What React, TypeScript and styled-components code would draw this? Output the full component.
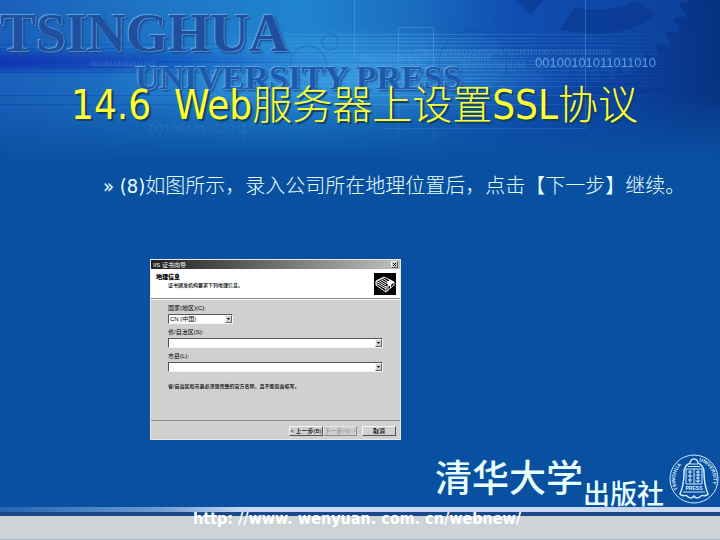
import React from "react";
import styled, { createGlobalStyle } from "styled-components";

const Global = createGlobalStyle`
  * { box-sizing: border-box; }
  body { margin: 0; background: #0a50a1; }
`;

const Slide = styled.main`
  position: relative;
  isolation: isolate;
  display: flex;
  flex-direction: column;
  min-height: 100vh;
  overflow: hidden;
  background: #0a50a1;
  font-family: "DejaVu Sans Condensed", "Noto Sans CJK SC", sans-serif;
`;

const Artwork = styled.svg`
  position: absolute;
  z-index: -1;
  top: 0;
  left: 0;
  width: 100%;
  height: 170px;
`;

const Masthead = styled.header`
  height: 80px;
  padding-top: 2px;
  font-family: "Liberation Serif", serif;
  font-weight: 700;
  white-space: nowrap;
`;

const Wordmark = styled.div<{ $small?: boolean }>`
  font-size: ${(p) => (p.$small ? 34 : 54)}px;
  line-height: ${(p) => (p.$small ? 28 : 62)}px;
  padding-left: ${(p) => (p.$small ? 135 : 0)}px;
  color: ${(p) => (p.$small ? "#1a5bb0" : "#214fa0")};
  text-shadow: -1px -1px 1px #62a6dc, 1px 1px 1px #5590c8, 2px 2px 2px #123f86;
`;

const Title = styled.h1`
  margin: 0;
  padding-left: 71px;
  font-size: 40px;
  line-height: 50px;
  font-weight: 300;
  color: #ffff32;
  text-shadow: 2px 2px 1px #123f5c;
  white-space: pre;
`;

const Point = styled.p`
  margin: 43px 0 0;
  padding-left: 103px;
  font-size: 20px;
  line-height: 26px;
  font-weight: 300;
  color: #e6ffff;
  white-space: nowrap;
`;

const Dialog = styled.section`
  width: 251px;
  margin: 60px 0 0 150px;
  border: 1px solid #e8e8e8;
  background: #d0d0d0;
  color: #000;
  font-family: "Liberation Sans", "Noto Sans CJK SC", sans-serif;
  font-size: 6px;
  line-height: 8px;
  white-space: nowrap;
`;

const TitleBar = styled.div`
  display: flex;
  align-items: center;
  justify-content: space-between;
  height: 9px;
  padding: 0 2px;
  background: linear-gradient(90deg, #202020, #c0c0c0);
  color: #fff;
`;

const CloseButton = styled.button`
  display: flex;
  align-items: center;
  justify-content: center;
  width: 7px;
  height: 7px;
  padding: 0;
  border: 1px solid;
  border-color: #f4f4f4 #555 #555 #f4f4f4;
  background: #d0d0d0;
`;

const Banner = styled.div`
  display: flex;
  justify-content: space-between;
  height: 30px;
  padding: 4px 4px 0 5px;
  border-bottom: 1px solid #8a8a8a;
  background: #fff;
`;

const BannerTitle = styled.h2`
  margin: 0;
  font-size: 6px;
  line-height: 8px;
  font-weight: 900;
`;

const BannerText = styled.p`
  margin: 0;
  padding-left: 12px;
  font-size: 5px;
  line-height: 8px;
  font-weight: 500;
`;

const Form = styled.form`
  border-top: 1px solid #f4f4f4;
`;

const Fields = styled.div`
  display: flex;
  flex-direction: column;
  height: 120px;
  padding: 4px 17px 0;
`;

const Label = styled.label`
  line-height: 9px;
`;

const Combo = styled.div<{ $short?: boolean }>`
  display: flex;
  width: ${(p) => (p.$short ? "65px" : "100%")};
  height: 10px;
  margin: 1px 0 4px;
  border: 1px solid;
  border-color: #555 #f4f4f4 #f4f4f4 #555;
  background: #fff;
`;

const fieldStyle = `
  flex: 1;
  min-width: 0;
  margin: 0;
  padding: 0 1px;
  border: 0;
  outline: 0;
  border-radius: 0;
  appearance: none;
  background: transparent;
  color: #000;
  font: 6px/8px "Liberation Sans", "Noto Sans CJK SC", sans-serif;
`;

const Select = styled.select`${fieldStyle}`;
const Input = styled.input`${fieldStyle}`;

const DropButton = styled.button`
  display: flex;
  align-items: center;
  justify-content: center;
  width: 7px;
  padding: 0;
  border: 1px solid;
  border-color: #f4f4f4 #666 #666 #f4f4f4;
  background: #d0d0d0;
`;

const Note = styled.p`
  margin: 6px 0 0;
  font-size: 5px;
  font-weight: 500;
`;

const Actions = styled.div`
  display: flex;
  justify-content: flex-end;
  height: 19px;
  padding: 5px 4px 4px;
  border-top: 1px solid #8a8a8a;
`;

const ActionButton = styled.button<{ $apart?: boolean }>`
  width: 34px;
  height: 10px;
  margin-left: ${(p) => (p.$apart ? 5 : 0)}px;
  padding: 0;
  border: 1px solid;
  border-color: #f4f4f4 #555 #555 #f4f4f4;
  background: #d0d0d0;
  color: #000;
  font: 500 6px/8px "Liberation Sans", "Noto Sans CJK SC", sans-serif;
  white-space: nowrap;
  &:disabled { color: #909090; border-color: #e4e4e4 #8a8a8a #8a8a8a #e4e4e4; }
`;

const Publisher = styled.div`
  display: flex;
  align-items: flex-end;
  justify-content: flex-end;
  margin-top: auto;
  padding-right: 1px;
  color: #e8ffff;
  font-weight: 500;
  white-space: nowrap;
`;

const University = styled.span`
  padding-bottom: 6px;
  font-size: 37px;
  line-height: 42px;
`;

const Press = styled.span`
  font-size: 27px;
  line-height: 25px;
`;

const Seal = styled.svg`
  width: 50px;
  height: 50px;
  margin: 0 0 3px 5px;
`;

const Footer = styled.footer`
  display: flex;
  justify-content: center;
  height: 33px;
  padding-right: 6px;
  border-bottom: 1px solid #a6b6c6;
  background:
    linear-gradient(90deg, #2464b0, #6c9bd2 22%, #c8d8f0 34%) 0 0 / 100% 5px no-repeat,
    linear-gradient(#174a88, #174a88) 0 5px / 100% 4px no-repeat,
    #ced3d6;
`;

const SiteLink = styled.a`
  color: #fff;
  font: 700 16px/24px "DejaVu Sans Condensed", "DejaVu Sans", sans-serif;
  text-decoration: none;
`;

const Arrow = () => (
  <svg width="3" height="2" viewBox="0 0 3 2" aria-hidden="true">
    <path d="M0 0h3L1.5 2z" />
  </svg>
);

const BITS = "00100101011011010";

const scanLines = [34, 38, 41, 45, 50, 54, 57, 60, 64, 67, 70, 74, 78, 81, 86, 95, 104];

function gear(cx: number, cy: number, r: number, teeth: number) {
  const points: string[] = [];
  for (let i = 0; i < teeth * 4; i++) {
    const angle = (i / (teeth * 4)) * Math.PI * 2;
    const radius = i % 4 < 2 ? r : r - 9;
    points.push(`${(cx + radius * Math.cos(angle)).toFixed(1)},${(cy + radius * Math.sin(angle)).toFixed(1)}`);
  }
  return points.join(" ");
}

function Backdrop() {
  return (
    <Artwork viewBox="0 0 720 170" preserveAspectRatio="xMidYMin slice" aria-hidden="true">
      <defs>
        <linearGradient id="sky">
          <stop offset="0" stopColor="#1a5fba" />
          <stop offset="0.2" stopColor="#1e74c6" />
          <stop offset="0.42" stopColor="#2085d0" />
          <stop offset="0.58" stopColor="#1a6cc0" />
          <stop offset="0.72" stopColor="#0f4aae" />
          <stop offset="0.9" stopColor="#0a3b96" />
          <stop offset="1" stopColor="#07317f" />
        </linearGradient>
        <linearGradient id="fade" x2="0" y2="1">
          <stop offset="0" stopColor="#0a50a1" stopOpacity="0" />
          <stop offset="0.55" stopColor="#0a50a1" stopOpacity="0.05" />
          <stop offset="0.95" stopColor="#0a50a1" />
        </linearGradient>
        <linearGradient id="band">
          <stop offset="0" stopColor="#0c31b4" />
          <stop offset="1" stopColor="#0c31b4" stopOpacity="0" />
        </linearGradient>
        <linearGradient id="streak">
          <stop offset="0" stopColor="#7fc0f4" stopOpacity="0" />
          <stop offset="0.45" stopColor="#7fc0f4" stopOpacity="0.28" />
          <stop offset="1" stopColor="#7fc0f4" stopOpacity="0" />
        </linearGradient>
        <radialGradient id="glow">
          <stop offset="0" stopColor="#3aa2e6" stopOpacity="0.85" />
          <stop offset="1" stopColor="#39a0e4" stopOpacity="0" />
        </radialGradient>
        <filter id="soft" x="-5%" y="-20%" width="110%" height="140%">
          <feGaussianBlur stdDeviation="0 3" />
        </filter>
      </defs>
      <path fill="url(#sky)" d="M0 0h720v170H0z" />
      <ellipse cx="340" cy="78" rx="240" ry="52" fill="url(#glow)" />
      <path fill="url(#band)" opacity=".9" d="M-20 53h360v17H-20z" filter="url(#soft)" />
      <path fill="url(#band)" opacity=".4" d="M0 44h220v1H0zM0 48h260v1H0zM0 61h380v2H0zM0 67h340v1H0zM0 72h280v1H0zM0 95h200v1H0zM0 104h180v1H0z" />
      <g fill="none" stroke="#083a94" opacity=".35">
        <polygon points={gear(590, -20, 102, 38)} fill="#1457b8" stroke="none" />
        <polygon points={gear(480, 75, 62, 26)} fill="#1560ba" stroke="none" opacity=".5" />
        <circle cx="680" cy="92" r="27" />
        <circle cx="473" cy="64" r="34" />
        <circle cx="459" cy="117" r="19" />
        <circle cx="479" cy="139" r="8" />
        <circle cx="308" cy="64" r="18" />
        <circle cx="330" cy="42" r="8" />
        <circle cx="615" cy="128" r="30" />
      </g>
      <path fill="#09388f" opacity=".65" d="M559 30l15-22q24 3 48-1l15-6 20 13-8 5q-20 15-57 15zM515 0l16 14 13-14z" />
      <path fill="#0a3a8c" opacity=".35" d="M652 110q30-12 68 0v60h-68z" />
      {scanLines.map((y) => (
        <path key={y} d={`M180 ${y}h520v1H180z`} fill="url(#streak)" />
      ))}
      <g fill="none" stroke="#69afe8" opacity=".4">
        <path d="M585.500 0v128.500H380M398.500 140V27.500h35V140M354.500 0v60M243.500 125v25" />
      </g>
      <g fill="#7dbcf0" fontFamily="Liberation Sans, sans-serif">
        <text x="535" y="67" fontSize="13" opacity=".75">{BITS}</text>
        <text x="149" y="133" fontSize="13" opacity=".35">{BITS}</text>
        <g fontSize="7" opacity=".35">
          <text x="415" y="54">{BITS + BITS + BITS}</text>
          <text x="360" y="60">{BITS + BITS}</text>
          <text x="460" y="67">{BITS}</text>
          <text x="90" y="66">{BITS}</text>
        </g>
      </g>
      <path fill="url(#fade)" d="M0 0h720v170H0z" />
    </Artwork>
  );
}

function UniversitySeal() {
  return (
    <Seal viewBox="0 0 50 50" role="img" aria-label="Tsinghua University Press">
      <defs>
        <path id="sealLeft" d="M9 35A18.500 18.500 0 0 1 21 7" />
        <path id="sealRight" d="M30 7A18.500 18.500 0 0 1 38 39" />
      </defs>
      <g fill="none" stroke="#cdeaff">
        <circle cx="25" cy="25" r="24" />
        <path d="M25 5c-3 0-4 3-4 4-4 2-6 5-6 9 0 9-1 15-4 22 3 4 5 0 7 2s5 3 7 0c2 3 5 2 7 0s4 2 7-2c-3-7-4-13-4-22 0-4-2-7-6-9 0-1-1-4-4-4z" strokeWidth="1.500" />
        <path d="M17 15h16v15H17zM25 15v15M19 18h4M21 16v13M18.500 22h5M19 26h4M27 18h4M29 16v13M26.500 21h5M27 24h4M26.500 27h5M21 10h8M19 12.500h12" />
        <path d="M14 38h22" />
      </g>
      <g fill="#dff4ff" fontFamily="Liberation Sans, sans-serif" fontWeight="700">
        <text fontSize="5"><textPath href="#sealLeft">TSINGHUA</textPath></text>
        <text fontSize="5"><textPath href="#sealRight">UNIVERSITY</textPath></text>
        <text x="25" y="36" fontSize="5" textAnchor="middle">PRESS</text>
      </g>
    </Seal>
  );
}

function WizardIcon() {
  return (
    <svg width="22" height="22" viewBox="0 0 22 22" aria-hidden="true">
      <path d="M0 0h22v22H0z" />
      <g fill="none" stroke="#fff">
        <path d="M2 8l8-4 10 5v3l-8 7L2 12zM2 8l10 6 8-5M2 10l10 6M12 14v5M4 7l8 5M6 6l8 5M8 5l8 5" />
        <path d="M13 10l3-3 3 2-3 4z" fill="#fff" />
        <path d="M14 13v4M16.500 12v3" />
      </g>
    </svg>
  );
}

export default function App() {
  return (
    <Slide>
      <Global />
      <Backdrop />
      <Masthead>
        <Wordmark>TSINGHUA</Wordmark>
        <Wordmark $small>UNIVERSITY PRESS</Wordmark>
      </Masthead>
      <Title>14.6  Web服务器上设置SSL协议</Title>
      <Point>» (8)如图所示，录入公司所在地理位置后，点击【下一步】继续。</Point>

      <Dialog aria-label="IIS 证书向导">
        <TitleBar>
          <span>IIS 证书向导</span>
          <CloseButton aria-label="关闭">
            <svg width="3" height="3" viewBox="0 0 3 3" aria-hidden="true">
              <path d="M0 0l3 3M3 0L0 3" stroke="#000" />
            </svg>
          </CloseButton>
        </TitleBar>
        <Banner>
          <div>
            <BannerTitle>地理信息</BannerTitle>
            <BannerText>证书颁发机构要求下列地理信息。</BannerText>
          </div>
          <WizardIcon />
        </Banner>
        <Form onSubmit={(e) => e.preventDefault()}>
          <Fields>
            <Label htmlFor="country">国家(地区)(C):</Label>
            <Combo $short>
              <Select id="country" defaultValue="CN">
                <option value="CN">CN (中国)</option>
              </Select>
              <DropButton type="button" tabIndex={-1} aria-label="展开国家"><Arrow /></DropButton>
            </Combo>
            <Label htmlFor="province">省/自治区(S):</Label>
            <Combo>
              <Input id="province" />
              <DropButton type="button" aria-label="展开省份"><Arrow /></DropButton>
            </Combo>
            <Label htmlFor="city">市县(L):</Label>
            <Combo>
              <Input id="city" />
              <DropButton type="button" aria-label="展开市县"><Arrow /></DropButton>
            </Combo>
            <Note>省/自治区和市县必须是完整的官方名称，且不能包含缩写。</Note>
          </Fields>
          <Actions>
            <ActionButton type="button">&lt; 上一步(B)</ActionButton>
            <ActionButton type="submit" disabled>下一步(N) &gt;</ActionButton>
            <ActionButton type="button" $apart>取消</ActionButton>
          </Actions>
        </Form>
      </Dialog>

      <Publisher>
        <University>清华大学</University>
        <Press>出版社</Press>
        <UniversitySeal />
      </Publisher>
      <Footer>
        <SiteLink href="http://www.wenyuan.com.cn/webnew/">http: //www. wenyuan. com. cn/webnew/</SiteLink>
      </Footer>
    </Slide>
  );
}
